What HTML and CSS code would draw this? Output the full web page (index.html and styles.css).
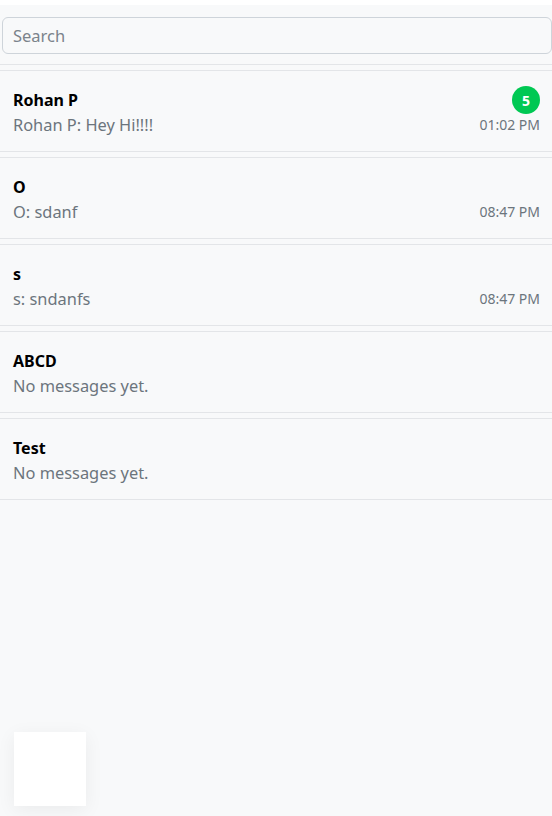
FILE: index.html
```html
<!DOCTYPE html>
<html>
<head>
<meta charset="utf-8">
<link rel="stylesheet" href="styles.css">
</head>
<body>
<div class="topbar"></div>
<div class="sidebar">
  <div class="search-wrap">
    <input class="search" type="text" placeholder="Search">
  </div>
  <ul class="chats">
    <li class="chat">
      <div class="row"><span class="name">Rohan P</span><span class="badge">5</span></div>
      <div class="row"><span class="msg">Rohan P: Hey Hi!!!!</span><span class="time">01:02 PM</span></div>
    </li>
    <li class="chat">
      <div class="row"><span class="name">O</span></div>
      <div class="row"><span class="msg">O: sdanf</span><span class="time">08:47 PM</span></div>
    </li>
    <li class="chat">
      <div class="row"><span class="name">s</span></div>
      <div class="row"><span class="msg">s: sndanfs</span><span class="time">08:47 PM</span></div>
    </li>
    <li class="chat">
      <div class="row"><span class="name">ABCD</span></div>
      <div class="row"><span class="msg">No messages yet.</span></div>
    </li>
    <li class="chat">
      <div class="row"><span class="name">Test</span></div>
      <div class="row"><span class="msg">No messages yet.</span></div>
    </li>
  </ul>
</div>
<div class="floating"></div>
</body>
</html>
```
FILE: styles.css
```css
* { box-sizing: border-box; }
html, body {
  margin: 0;
  height: 100%;
}
body {
  background: #f8f9fa;
  font-family: "Noto Sans", "Segoe UI", sans-serif;
  color: #000;
}
.topbar {
  height: 5px;
  background: #fff;
}
.sidebar {
  display: flex;
  flex-direction: column;
}
.search-wrap {
  padding: 12px 0 10px 2px;
  border-bottom: 1px solid #e3e5e8;
}
.search {
  display: block;
  width: 100%;
  height: 37px;
  padding: 0 10px;
  font: 16.5px "Noto Sans", sans-serif;
  color: #212529;
  background: #f8f9fa;
  border: 1px solid #ced4da;
  border-radius: 6px;
  outline: none;
}
.search::placeholder { color: #7b838b; }
.chats {
  list-style: none;
  margin: 0;
  padding: 0;
}
.chat {
  margin-top: 5px;
  padding: 17px 12px 14px 13px;
  border-top: 1px solid #e3e5e8;
  border-bottom: 1px solid #e3e5e8;
}
.row {
  display: flex;
  justify-content: space-between;
  align-items: center;
  height: 24px;
}
.row + .row {
  margin-top: 1px;
}
.name {
  font-size: 16px;
  font-weight: 700;
  line-height: 24px;
}
.msg {
  font-size: 16.4px;
  color: #6c757d;
  line-height: 24px;
}
.time {
  font-size: 14px;
  color: #6c757d;
  line-height: 24px;
  align-self: flex-end;
}
.badge {
  width: 28px;
  height: 28px;
  border-radius: 50%;
  background: #00c853;
  color: #fff;
  font-size: 14px;
  font-weight: 700;
  display: flex;
  align-items: center;
  justify-content: center;
}
.floating {
  position: fixed;
  left: 14px;
  bottom: 10px;
  width: 72px;
  height: 74px;
  background: #fff;
  box-shadow: 0 4px 18px rgba(0,0,0,0.06);
}
```
